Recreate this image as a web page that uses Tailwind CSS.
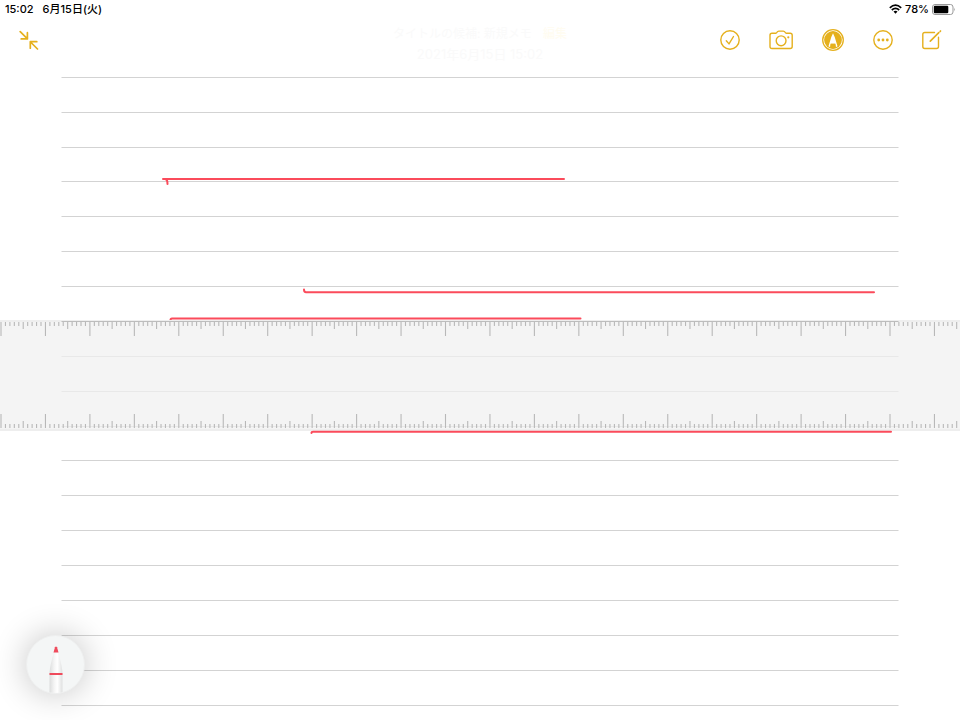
<!DOCTYPE html>
<html lang="ja">
<head>
    <meta charset="UTF-8">
    <meta name="viewport" content="width=device-width, initial-scale=1.0">
    <title>メモ</title>
    <script src="https://cdn.jsdelivr.net/npm/@tailwindcss/browser@4"></script>
</head>
<body class="bg-white font-['Inter','Noto_Sans_CJK_JP',sans-serif] text-black">
    <div class="relative flex min-h-screen flex-col overflow-hidden">
        <!-- Drawing canvas -->
        <svg class="absolute inset-0 h-full w-full" viewBox="0 0 960 720" preserveAspectRatio="xMidYMid slice" role="img" aria-label="手書きキャンバス">
            <g id="rules" stroke="#d3d3d3" stroke-width="1"></g>
            <g fill="none" stroke="#fb4b5b" stroke-width="2" stroke-linecap="round" stroke-linejoin="round">
                <path d="M163 179H564M166 179.500Q167.500 180 167.500 184"/>
                <path d="M304 289.500Q304 292.300 306 292.300H874"/>
                <path d="M170.500 322V320Q170.500 318.500 172 318.500H580.500"/>
            </g>
            <!-- Ruler -->
            <rect x="0" y="320" width="960" height="111" fill="#eeeeee"/>
            <rect x="0" y="322" width="960" height="107" fill="#f4f4f4"/>
            <path d="M61.500 321.500H898.500" stroke="#bdbdbd"/>
            <path d="M61.500 356.500H898.500M61.500 391.500H898.500M61.500 426.500H898.500" stroke="#e8e8e8"/>
            <g id="ticks" stroke="#b8b8b8" stroke-width="1.100"></g>
            <path d="M311.500 433V432.500Q311.500 431.800 313 431.800H891" fill="none" stroke="#fb4b5b" stroke-width="2" stroke-linecap="round"/>
        </svg>

        <!-- Status bar -->
        <div class="relative flex h-[18px] items-center justify-between pr-1 pl-[5px] text-[11px] leading-none font-medium">
            <div class="flex gap-[9px]">
                <span>15:02</span>
                <span>6月15日(火)</span>
            </div>
            <div class="flex items-center gap-[3px]">
                <svg class="h-[10px] w-[13px]" viewBox="0 0 13 10" fill="none" stroke="#000" stroke-width="1.700" aria-hidden="true">
                    <path d="M.8 3.800Q6.500-1.400 12.200 3.800M2.800 6Q6.500 2.600 10.200 6"/>
                    <path d="M4.500 7.600Q6.500 5.900 8.500 7.600L6.500 9.700Z" fill="#000" stroke="none"/>
                </svg>
                <span>78%</span>
                <svg class="h-[11px] w-[24px]" viewBox="0 0 24 11" aria-hidden="true">
                    <rect x=".5" y=".5" width="20.500" height="10" rx="2.500" fill="none" stroke="#999"/>
                    <rect x="1.800" y="1.800" width="14.500" height="7.400" rx="1.200" fill="#000"/>
                    <path d="M22 3.700Q23.500 5.500 22 7.300Z" fill="#999"/>
                </svg>
            </div>
        </div>

        <!-- Toolbar -->
        <header class="relative flex h-11 items-center justify-between pr-[18px] pl-[19px] text-[#e5b01d]">
            <button type="button" aria-label="縮小">
                <svg class="block size-[20px]" viewBox="0 0 20 20" fill="none" stroke="currentColor" stroke-width="1.700" stroke-linecap="round" stroke-linejoin="round">
                    <path d="M1.200 1.700L8.200 8.700M2.200 8.900H8.400V2.700M18.500 19L11.500 12M17.800 11.700H11.300V18.200"/>
                </svg>
            </button>
            <div class="flex items-center gap-[29px]">
                <button type="button" aria-label="チェックリスト">
                    <svg class="block size-[20px]" viewBox="0 0 20 20" fill="none" stroke="currentColor" stroke-width="1.400" stroke-linecap="round" stroke-linejoin="round">
                        <circle cx="10" cy="10" r="9.200"/>
                        <path d="M6.300 10.800L9 13.900L13.500 6.500"/>
                    </svg>
                </button>
                <button type="button" aria-label="カメラ">
                    <svg class="block h-[20px] w-[24px]" viewBox="0 0 24 20" fill="none" stroke="currentColor" stroke-width="1.400" stroke-linejoin="round">
                        <path d="M3 3.300H6.800Q7.500 3.300 8 2.300Q8.600 1.100 9.800 1.100H14.300Q15.500 1.100 16.100 2.300Q16.600 3.300 17.300 3.300H21.200Q23.200 3.300 23.200 5.300V16.500Q23.200 18.500 21.200 18.500H3Q1 18.500 1 16.500V5.300Q1 3.300 3 3.300Z"/>
                        <circle cx="12.100" cy="10.800" r="4.900"/>
                        <circle cx="19.300" cy="7.300" r="1.100" fill="currentColor" stroke="none"/>
                    </svg>
                </button>
                <button type="button" aria-label="マークアップ">
                    <svg class="block size-[22px]" viewBox="0 0 22 22">
                        <circle cx="11" cy="11" r="10.300" fill="none" stroke="currentColor" stroke-width="1.300"/>
                        <circle cx="11" cy="11" r="8.900" fill="currentColor"/>
                        <path d="M6.500 17.300L9.300 8L11 4.300L12.700 8L15.500 17.300L13.800 18.300L13.300 14.800H8.700L8.200 18.300Z" fill="#fff"/>
                        <path d="M8.700 14.800H13.300L13.800 18.700Q11 20 8.200 18.700Z" fill="currentColor"/>
                    </svg>
                </button>
                <button type="button" aria-label="その他">
                    <svg class="block size-[20px]" viewBox="0 0 20 20">
                        <circle cx="10" cy="10" r="9.200" fill="none" stroke="currentColor" stroke-width="1.400"/>
                        <g fill="currentColor">
                            <circle cx="5.700" cy="10" r="1.400"/>
                            <circle cx="10" cy="10" r="1.400"/>
                            <circle cx="14.300" cy="10" r="1.400"/>
                        </g>
                    </svg>
                </button>
                <button type="button" aria-label="新規メモ">
                    <svg class="block size-[20px]" viewBox="0 0 20 20" fill="none" stroke="currentColor" stroke-width="1.400" stroke-linecap="round" stroke-linejoin="round">
                        <path d="M12.500 2.500H2.800Q.8 2.500 .8 4.500V16.500Q.8 18.500 2.800 18.500H14.500Q16.500 18.500 16.500 16.500V7.300"/>
                        <path d="M8.300 11.200L16.800 2.700" stroke-width="1.700"/>
                        <path d="M18.200 1.300L18.500 1" stroke-width="1.700"/>
                    </svg>
                </button>
            </div>

            <!-- Faded title -->
            <div class="pointer-events-none absolute inset-x-0 top-[5px] text-center text-[12px] leading-[21px] text-[#fafafa]">
                <p>タイトルの候補: 新規メモ <a href="#" class="ml-2 text-[#fffcf0]">編集</a></p>
                <p class="text-[13px]">2021年6月15日 15:02</p>
            </div>
        </header>

        <main class="grow"></main>

        <!-- Minimised tool palette -->
        <button type="button" aria-label="ペン" class="absolute bottom-[26px] left-[26px] size-[59px] overflow-hidden rounded-full border border-[#eeefef] bg-[#f4f6f6] shadow-[0_0_34px_rgba(0,0,0,0.24)]">
            <svg class="block size-full" viewBox="0 0 57 57">
                <defs>
                    <linearGradient id="barrel">
                        <stop offset="0" stop-color="#dcdddd"/>
                        <stop offset=".35" stop-color="#f4f4f4"/>
                        <stop offset=".6" stop-color="#ffffff"/>
                        <stop offset="1" stop-color="#dfe0e0"/>
                    </linearGradient>
                </defs>
                <path d="M22.500 57V37Q23 29 27 16H31Q35 29 35.500 37V57Z" fill="url(#barrel)"/>
                <path d="M26.500 16.500L28 11.300Q29 9.500 30 11.300L31.500 16.500Z" fill="#ef4b5c"/>
                <path d="M22.500 38H35.500" stroke="#ef4b5c" stroke-width="2"/>
            </svg>
        </button>
    </div>

    <script>
        const SVG_NS = 'http://www.w3.org/2000/svg';

        function addLine(parent, x1, y1, x2, y2) {
            const line = document.createElementNS(SVG_NS, 'line');
            line.setAttribute('x1', x1);
            line.setAttribute('y1', y1);
            line.setAttribute('x2', x2);
            line.setAttribute('y2', y2);
            parent.appendChild(line);
        }

        // Ruled paper, the ruler covers rows 8 to 10
        const rules = document.getElementById('rules');
        for (let i = 0; i < 19; i++) {
            const y = Math.floor(77.3 + i * 34.88) + 0.5;
            addLine(rules, 61.5, y, 898.5, y);
        }

        // Ruler marks on both edges
        const ticks = document.getElementById('ticks');
        for (let i = 0; i < 216; i++) {
            const x = 1 + i * 4.445;
            const size = i % 10 === 0 ? 14 : i % 5 === 0 ? 7 : 4;
            addLine(ticks, x, 322, x, 322 + size);
            addLine(ticks, x, 428 - size, x, 428);
        }
    </script>
</body>
</html>
